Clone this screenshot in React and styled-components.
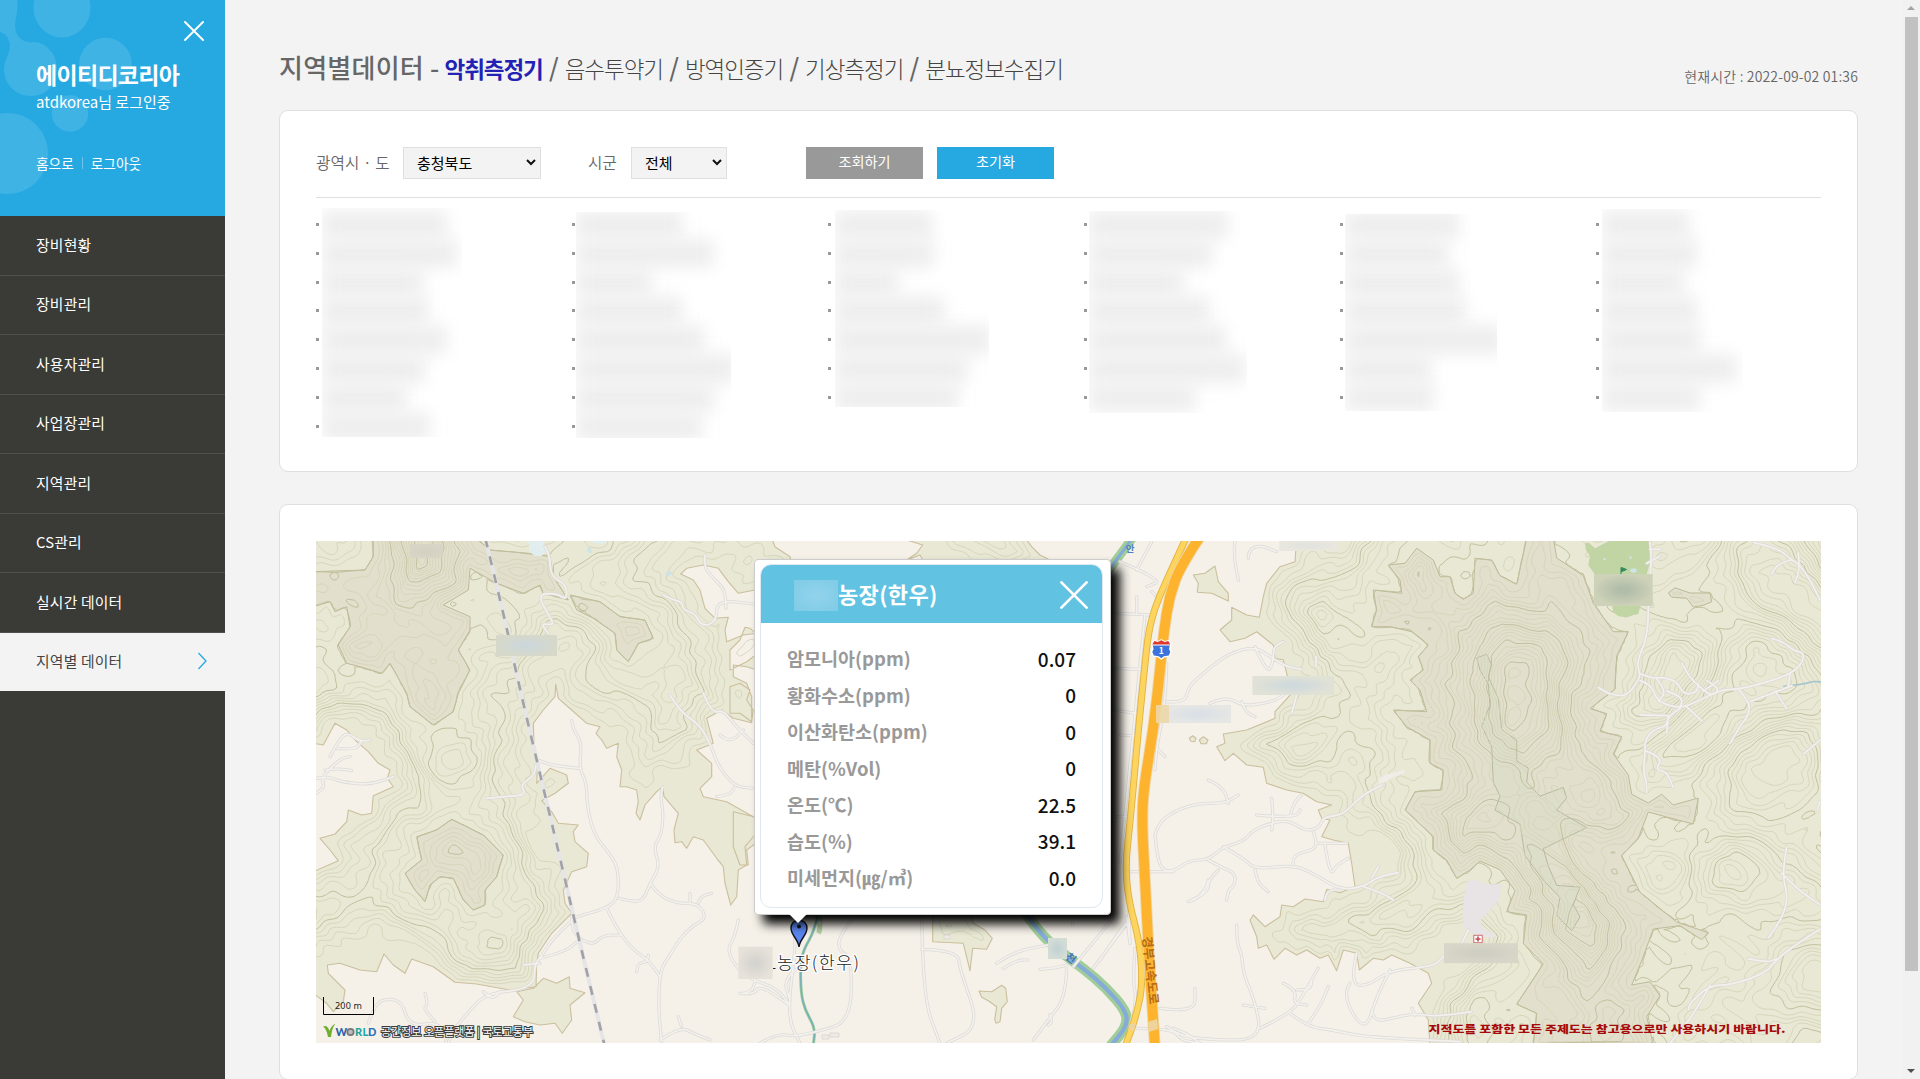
import React from "react";
import styled, { createGlobalStyle } from "styled-components";

const KR = `"Noto Sans CJK KR", "Noto Sans", sans-serif`;

/* ------------------------------------------------------------------ */
/* Terrain                                                             */
/* ------------------------------------------------------------------ */

const MAP = { x: 316, y: 541, w: 1505, h: 502 };

// Survey sheets: every sheet has an origin and its own units per pixel.
const SHEETS = {
  west: [310, 530, 3, 3],
  east: [1100, 530, 3, 3],
  far: [1420, 530, 3, 2.856],
  south: [740, 880, 3, 3],
  mid: [740, 540, 3, 3],
};

const pts = (sheet, text) => {
  const [ox, oy, sx, sy] = SHEETS[sheet];
  return text
    .trim()
    .split(/\s+/)
    .map((p) => p.split(",").map(Number))
    .map(([u, v]) => [ox + u / sx, oy + v / sy]);
};

const fmt = (n) => n.toFixed(1);

const closed = (p) => "M" + p.map(([x, y]) => `${fmt(x)} ${fmt(y)}`).join("L") + "Z";

const smooth = (p) => {
  let d = `M${fmt(p[0][0])} ${fmt(p[0][1])}`;
  for (let i = 1; i < p.length - 1; i++) {
    const mx = (p[i][0] + p[i + 1][0]) / 2;
    const my = (p[i][1] + p[i + 1][1]) / 2;
    d += `Q${fmt(p[i][0])} ${fmt(p[i][1])} ${fmt(mx)} ${fmt(my)}`;
  }
  const e = p[p.length - 1];
  return d + `L${fmt(e[0])} ${fmt(e[1])}`;
};

const HILLS = [
  pts("west", `10,25 1385,25 1395,50 1440,80 1445,100 1400,170 1335,180 1285,190 1255,155 1225,115 1180,105 1130,115 1112,132 1150,150 1170,180 1185,235 1215,265 1255,262 1245,300 1250,335 1300,315 1340,310 1400,350 1340,420 1310,410 1270,405 1270,440 1310,460 1325,500 1325,578 1270,565 1235,540 1190,565 1210,640 1160,660 1205,700 1205,740 1170,775 1180,800 1250,815 1332,862 1370,880 1332,918 1305,950 1310,1005 1285,1020 1280,1100 1262,1125 1245,1060 1240,1010 1220,985 1180,930 1150,920 1130,955 1115,935 1095,938 1092,900 1105,850 1062,800 1058,770 1040,785 1005,825 990,870 978,850 985,815 980,780 950,770 930,770 935,720 920,680 925,640 890,655 875,630 858,610 870,590 830,580 785,540 745,505 737,462 735,500 700,540 670,580 672,640 683,700 680,760 720,715 770,735 775,760 735,790 695,812 725,845 745,880 805,885 790,905 795,935 835,970 830,1010 785,1025 760,1080 765,1120 785,1150 725,1210 685,1270 680,1300 678,1370 600,1380 500,1362 435,1357 370,1310 305,1287 285,1330 250,1305 222,1272 200,1325 150,1320 90,1300 52,1305 55,1330 105,1380 100,1415 70,1445 50,1420 10,1390 10,1025 85,992 60,960 30,925 75,912 110,875 115,840 155,855 185,850 190,797 250,770 232,745 240,720 205,700 175,665 140,635 110,600 75,580 40,645 10,640`),
  pts("west", `700,1345 740,1360 778,1340 780,1375 825,1388 780,1425 785,1470 757,1510 735,1480 690,1485 645,1475 610,1460 640,1410 620,1385 670,1375`),
  pts("east", `590,25 585,95 540,110 500,160 490,200 478,262 440,255 395,232 395,270 360,300 390,335 435,325 470,305 520,345 525,385 550,390 560,430 575,490 525,545 525,565 440,600 370,612 375,640 350,650 375,692 400,670 440,705 490,712 500,760 560,780 610,790 650,815 695,825 655,840 665,865 690,870 665,920 700,930 745,940 755,1000 765,1070 720,1088 680,1078 670,1115 615,1107 580,1130 545,1125 540,1160 495,1190 460,1155 450,1170 470,1220 475,1255 500,1245 522,1288 555,1255 590,1275 620,1260 660,1285 685,1275 710,1322 730,1260 770,1270 778,1320 820,1285 850,1290 875,1275 930,1300 985,1330 995,1360 955,1420 985,1470 990,1550 2200,1550 2200,25`),
  pts("east", `280,135 315,130 345,108 355,155 385,190 385,213 335,190 292,187 295,160`),
  pts("east", `268,625 278,617 288,625 284,635 273,634`),
  pts("east", `298,630 310,620 324,630 319,641 303,641`),
  pts("mid", `500,0 560,0 590,0 860,0 875,20 900,45 930,60 800,80 560,80 540,45 500,60 530,40 548,15`),
  pts("mid", `30,265 15,262 0,300 -30,330 -30,390 20,365 60,335 60,290`),
  pts("mid", `-30,440 0,430 30,450 20,480 40,510 35,545 0,520 -30,520`),
  pts("mid", `-20,815 60,835 60,900 20,930 25,975 0,975 -20,920`),
  pts("south", `578,100 578,185 670,190 690,272 698,205 740,208 757,175 735,150 700,130 690,100`),
  pts("south", `717,333 755,335 785,316 797,325 802,365 785,385 780,425 768,430 764,418 770,380 745,362 725,352`),
];

const SLOPES = [
  pts("west", `190,25 190,80 165,120 10,125 10,230 60,215 75,245 110,230 120,290 85,345 110,400 150,410 215,430 240,400 290,490 300,530 370,585 430,545 445,490 480,420 445,360 480,300 480,260 400,225 475,180 480,115 560,160 640,190 690,165 700,190 775,210 730,140 720,80 655,70 540,60 500,25`),
  pts("west", `780,195 870,215 930,260 1005,270 1030,325 985,340 955,395 920,360 915,310 850,265 800,240`),
  pts("west", `425,868 520,915 580,975 560,1040 525,1080 525,1125 490,1140 460,1110 430,1045 390,1040 360,1065 345,1115 315,1080 285,1030 335,990 320,920 380,900`),
  pts("east", `865,105 915,100 950,55 1000,90 1020,140 1050,140 1065,190 1090,208 1120,190 1125,85 1175,90 1200,137 1250,163 1280,25 1360,25 1370,84 1450,137 1480,220 1540,305 1585,305 1550,378 1545,478 1470,536 1520,551 1500,604 1565,620 1540,672 1585,735 1595,793 1645,819 1685,793 1720,825 1795,804 1780,882 1700,861 1645,846 1615,924 1565,977 1620,1087 1730,1176 1825,1208 1805,1229 1740,1187 1660,1197 1625,1292 1595,1365 1650,1355 1680,1397 1640,1460 1660,1545 1300,1545 1310,1450 1250,1423 1330,1302 1270,1240 1280,1155 1220,1145 1245,1082 1200,1019 1140,993 1110,1020 1070,1045 1040,990 1000,960 1000,920 915,840 945,785 1025,780 1030,720 990,700 990,630 920,590 880,540 980,545 960,480 930,450 970,420 955,380 985,345 935,305 870,290 815,290 830,240 820,180 905,190 900,150`),
  pts("far", `745,180 765,165 810,180 870,180 875,205 850,215 820,220 800,195 755,192`),
];

const SUMMIT = pts("far", `170,365 200,355 215,385 205,420 235,480 245,570 290,600 290,660 325,680 320,720 360,760 430,735 440,765 410,800 500,850 370,910 385,960 410,1015 480,1020 460,1070 480,1105 455,1145 410,1100 420,1050 370,1000 315,930 300,840 225,800 240,760 220,720 215,620 185,560 210,500 205,440 180,400`);

const beyond = ([x, y]) => x <= 316 || y <= 541 || x >= 1821 || y >= 1043;

const edgesOf = (polys) => {
  const out = [];
  polys.forEach((p) =>
    p.forEach((a, i) => {
      const b = p[(i + 1) % p.length];
      if (!(beyond(a) && beyond(b))) out.push([a[0], a[1], b[0] - a[0], b[1] - a[1]]);
    })
  );
  return out;
};

const distance = (edges, x, y) => {
  let best = 1e9;
  for (let i = 0; i < edges.length; i++) {
    const e = edges[i];
    const px = x - e[0];
    const py = y - e[1];
    let t = (px * e[2] + py * e[3]) / (e[2] * e[2] + e[3] * e[3]);
    t = t < 0 ? 0 : t > 1 ? 1 : t;
    const dx = px - t * e[2];
    const dy = py - t * e[3];
    const d = dx * dx + dy * dy;
    if (d < best) best = d;
  }
  return Math.sqrt(best);
};

const inside = (polys, x, y) =>
  polys.some((p) => {
    let hit = false;
    for (let i = 0, j = p.length - 1; i < p.length; j = i++) {
      if (p[i][1] > y !== p[j][1] > y && x < ((p[j][0] - p[i][0]) * (y - p[i][1])) / (p[j][1] - p[i][1]) + p[i][0]) hit = !hit;
    }
    return hit;
  });

const buildContours = () => {
  const step = 3.5;
  const cols = Math.ceil(MAP.w / step) + 1;
  const rows = Math.ceil(MAP.h / step) + 1;
  const hillEdges = edgesOf(HILLS);
  const slopeEdges = edgesOf(SLOPES);
  const h = new Float32Array(cols * rows);
  for (let r = 0; r < rows; r++) {
    for (let c = 0; c < cols; c++) {
      const x = MAP.x + c * step;
      const y = MAP.y + r * step;
      const a = distance(hillEdges, x, y);
      if (!inside(HILLS, x, y)) {
        h[r * cols + c] = -a / 8;
        continue;
      }
      const b = distance(slopeEdges, x, y);
      const fine = Math.sin(x / 8 + 2 * Math.sin(y / 13)) * Math.cos(y / 7 + 1.6 * Math.sin(x / 15));
      const broad = Math.sin(x / 33 + 1.7 * Math.sin(y / 39)) + Math.cos(y / 29 + 1.9 * Math.sin(x / 45));
      const base = inside(SLOPES, x, y) ? 10 + b / 5 : (10 * a) / (a + Math.min(b, 90));
      const near = Math.min(a, b);
      h[r * cols + c] = base + fine * Math.min(0.75, near / 14) + broad * Math.min(4.2, near / 12);
    }
  }
  let minor = "";
  let major = "";
  for (let r = 0; r < rows - 1; r++) {
    for (let c = 0; c < cols - 1; c++) {
      const v = [h[r * cols + c], h[r * cols + c + 1], h[(r + 1) * cols + c + 1], h[(r + 1) * cols + c]];
      const lo = Math.max(1, Math.ceil(Math.min(...v)));
      const hi = Math.floor(Math.max(...v));
      const x = MAP.x + c * step;
      const y = MAP.y + r * step;
      const corner = [[x, y], [x + step, y], [x + step, y + step], [x, y + step]];
      for (let k = lo; k <= hi; k++) {
        const cross = [];
        for (let s = 0; s < 4; s++) {
          const n = (s + 1) % 4;
          if (v[s] >= k !== v[n] >= k) {
            const t = (k - v[s]) / (v[n] - v[s]);
            cross.push(`${fmt(corner[s][0] + (corner[n][0] - corner[s][0]) * t)} ${fmt(corner[s][1] + (corner[n][1] - corner[s][1]) * t)}`);
          }
        }
        for (let q = 0; q + 1 < cross.length; q += 2) {
          const seg = `M${cross[q]}L${cross[q + 1]}`;
          if (k % 5 === 0) major += seg;
          else minor += seg;
        }
      }
    }
  }
  return { minor, major };
};

const CONTOURS = buildContours();

const ROADS = {
  west: `705,50 720,75 722,140 770,165 770,210 740,190 680,192 725,270 730,285 692,280 715,310
785,572 790,600 815,635 808,715 830,760 830,820 850,910 890,960 925,1010 925,1105 890,1135 800,1160
683,690 715,705 808,715
530,805 580,800 650,795 630,765 670,740 680,700
1058,770 1050,800 1060,840 1055,915 1030,950 1050,1010 1020,1060 1000,1110 970,1115 925,1105
1020,1060 1045,1095 1100,1120 1165,1120 1190,1165 1150,1185 1110,1225 1080,1275 1050,1320 1045,1430 1055,1540
890,1135 925,1205 970,1260 1015,1290 1050,1340
1015,1275 1015,1295 985,1300 980,1325
1140,1090 1140,1120
1165,1120 1170,1100 1205,1090
800,1160 740,1210 690,1285 675,1300 670,1375 530,1390 480,1440 430,1500 415,1540
640,1305 690,1300
690,1285 770,1265 810,1225 850,1245 880,1215 935,1215
785,1160 785,1200 815,1230
175,1480 195,1420 235,1405 275,1415 300,1490 390,1475 410,1540
345,1390 355,1425 340,1435 375,1475
520,1385 545,1410 570,1385
18,745 60,740 90,755 180,765 250,740
18,790 45,775 35,745 60,715 95,685 120,680
60,680 80,640 110,605 150,635 180,630
45,720 80,715 125,722
80,655 140,660 155,630
1060,195 1090,210 1115,215 1120,240 1155,250 1175,290 1220,275 1220,210 1335,222
1185,75 1180,110 1215,150 1245,180 1248,235
1080,495 1110,545 1170,585 1205,650 1225,710 1275,770 1330,775
1180,490 1205,550 1240,540 1270,580 1330,640
1230,615 1260,640 1300,600
1220,800 1260,795 1275,770
1285,1170 1275,1220 1250,1260 1285,1320 1330,1350 1400,1375 1435,1420
1050,1530 1110,1490 1150,1510 1200,1530
1105,1460 1115,1490
1300,1390 1325,1385 1335,1355`,
  south: `545,110 548,350 600,490
545,208 652,210 660,270 720,440 620,490
1165,125 1060,265
1110,125 1000,260
980,260 978,350 925,420 880,480
900,268 940,265 980,255
930,405 938,425 925,435
335,120 295,170 298,215 335,230 333,425 228,455
165,120 165,200 160,260 148,350 150,430 180,490
165,270 130,300 150,360
0,340 40,345 60,315 148,375
60,490 110,460 165,470 228,455
770,250 820,215 925,195
790,265 830,240 865,240
1160,110 1170,190
1185,205 1178,300 1190,360 1170,440
1180,445 1300,445 1320,480 1380,490
1300,445 1340,460 1380,490
998,110 998,135
1345,65 1370,60 1400,20 1405,0`,
  east: `445,85 445,60 480,45 530,65
405,33 400,70 415,150
50,250 155,255
135,255 105,560 60,1000
60,95 190,150 140,170
110,120 155,35
155,185 180,210
110,200 110,250
45,415 120,418
40,540 110,550
60,615 105,618
50,860 85,860
80,1025 220,1025
200,400 197,515 170,650 165,720
170,655 195,680
0,1290 75,1180
85,1100 90,1240
200,515 255,520 265,470 310,430 385,370 465,350 510,380 560,410 605,418
465,350 500,430 520,400 520,350 550,335
330,520 380,498 430,530 520,515 550,495
425,515 435,545 465,560
590,495 575,550
648,380 648,410
165,915 175,880 220,845 290,820 375,820 415,795
325,750 370,770 385,820
165,915 170,970 185,1020 220,1025 270,990 325,990 370,950 430,935 460,900 510,880 565,870 620,905 660,890 670,860 730,855 780,800 845,765
470,855 520,860 590,858 600,840
515,805 520,860 515,900
570,860 580,820 605,795
370,950 430,985 465,1018 580,1005 640,1030 720,1080 790,1070 835,1040 895,1028
580,1005 575,975 640,960 650,940 640,905
650,940 740,940
675,945 690,1040 710,1005 745,985
325,990 370,1015 405,1030 405,1065 385,1080 380,1110
355,1020 325,1050 325,1085 265,1115
465,1018 470,1055 505,1085
815,1045 835,1010
675,1110 680,1080 720,1080
790,1070 850,1090 880,1110
410,1185 410,1240 425,1270 430,1330 455,1390 470,1440 480,1495 450,1530 350,1530 250,1520 200,1490
430,1425 460,1430 495,1435
180,1435 285,1450 285,1375
480,1495 570,1450 600,1410 655,1315
570,1450 620,1490 700,1500 785,1520 1080,1535
550,1360 590,1380 580,1420 620,1425
590,1380 630,1380 635,1355
625,1480 660,1430 685,1370
770,1270 750,1360 800,1370 870,1320 1000,1310 1030,1280
1085,1240 1105,1200
750,1360 725,1395 795,1510 830,1400 870,1320
815,1440 820,1475 880,1465 940,1450 1010,1460 1115,1445
935,1435 945,1455`,
  far: `690,35 697,90 685,150 685,300 650,375 660,410 655,430 620,475 570,470 535,450
680,95 720,75
690,55 722,55
660,410 700,425 720,420 770,430 790,470 830,465 835,440
660,430 695,440 710,490 780,510 830,490 905,455 955,455 1040,435 1115,410 1150,375 1150,350 1120,345 1090,320 1055,310
710,425 740,460 715,490
740,460 790,475 780,510
800,505 845,545
780,510 745,530 740,560 700,570 675,600 675,640 670,690 680,720 680,750
660,528 745,530
745,530 740,580
675,630 730,650 705,685 740,690 760,735
785,380 805,415 835,445 875,475 900,455 860,430
850,460 895,430
955,455 990,490 985,530 960,560 930,610
990,490 1060,465 1115,445
1105,445 1110,410
1065,460 1100,510
1000,35 1070,50 1115,85 1140,100 1175,150 1200,200
1135,65 1140,110 1125,150
1115,85 1075,95 1055,125
1200,600 1150,640
1100,905 1085,980 1105,1050 1085,1110 1045,1165
1085,980 1130,1025 1200,1070
1200,1140 1140,1175 1065,1230 1040,1265 930,1300 870,1300 810,1350 805,1370
870,1300 825,1380 750,1465
985,1225 1040,1235 1070,1225
1200,775 1192,800`,
};

const ROAD_PATH = Object.entries(ROADS)
  .flatMap(([sheet, text]) => text.split("\n").map((line) => smooth(pts(sheet, line))))
  .join("");

const HILL_PATH = HILLS.map(closed).join("");
const SLOPE_PATH = SLOPES.map(closed).join("");
const HIGHWAY = smooth(pts("east", `300,20 240,110 208,200 192,300 180,420 160,600 130,780 126,880 135,1050 145,1250 158,1450 165,1550`));
const BYWAY = smooth(pts("east", `260,20 195,160 162,240 145,310 135,400 115,600 90,880 76,1000 85,1110 120,1240 128,1370 105,1470 75,1550`));
const RAIL = smooth(pts("west", `526,25 590,290 612,400 680,690 735,920 805,1220 884,1548`));
const RIVER = smooth(pts("south", `850,90 895,155 960,215 1030,265 1100,325 1160,395 1160,440 1110,500`));
const RIVER_NORTH = smooth(pts("east", `100,20 60,75 20,130`));
const CREEK = smooth(pts("south", `235,100 222,155 190,210 181,260 183,340 195,390 226,445 220,495`));

const SMUDGES = [
  ["west", 300, 42, 398, 84, "#d9d5c6", "#d5d1c2"],
  ["west", 558, 315, 741, 378, "#d6d9ca", "#cdd7da"],
  ["west", 1285, 1250, 1388, 1347, "#e6e1d9", "#d6d4d0"],
  ["east", 538, 30, 715, 63, "#e9e7dd", "#e2e3df"],
  ["east", 457, 438, 702, 495, "#e0e2d6", "#d0d9dc"],
  ["east", 195, 525, 393, 579, "#e6e7e4", "#dae0e6"],
  ["far", 522, 126, 698, 217, "#cdd2b8", "#b2bda9"],
  ["far", 72, 1180, 294, 1237, "#d8d6c8", "#cfcec3"],
  ["south", 924, 174, 981, 237, "#d3ddd6", "#c3d2d3"],
];

const Smudge = ({ item: [sheet, u1, v1, u2, v2, edge, core], id }) => {
  const [[x1, y1], [x2, y2]] = pts(sheet, `${u1},${v1} ${u2},${v2}`);
  return (
    <>
      <radialGradient id={id}>
        <stop offset="0.2" stopColor={core} />
        <stop offset="1" stopColor={edge} />
      </radialGradient>
      <rect x={x1} y={y1} width={x2 - x1} height={y2 - y1} fill={`url(#${id})`} />
    </>
  );
};

const MapSvg = styled.svg`
  display: block;
  width: 1505px;
  height: 502px;
  font-family: ${KR};
`;

const Terrain = () => (
  <MapSvg viewBox="316 541 1505 502">
    <rect x="316" y="541" width="1505" height="502" fill="#f5f1e9" />
    <path d={HILL_PATH} fill="#e8e8d4" stroke="#cbbf9d" strokeWidth="1.1" strokeLinejoin="round" />
    <path d={SLOPE_PATH} fill="#e2dfcc" stroke="#bdba98" strokeWidth="1" strokeLinejoin="round" />
    <path d={closed(SUMMIT)} fill="#dddeca" stroke="#b6bb9d" strokeWidth="1" strokeLinejoin="round" />
    <path d={CONTOURS.minor} fill="none" stroke="#d6d4b9" strokeWidth="0.9" />
    <path d={CONTOURS.major} fill="none" stroke="#c2c09e" strokeWidth="1" />

    <path d={closed(pts("west", `655,25 658,65 675,78 695,78 708,65 700,25`))} fill="#e2edee" />
    <path d={closed(pts("west", `835,25 850,38 870,42 890,36 895,25`))} fill="#e2edee" />
    <path d="M588 546l4 4-1 4-4-3zM665 573l6-2 1 3-5 3z" fill="#cfe3e6" />

    <path d={closed(pts("far", `495,38 505,36 525,52 570,30 600,20 690,20 690,90 680,128 525,128 505,100 510,75 497,55`))} fill="#c0d4a4" />
    <path d={closed(pts("far", `576,212 662,212 655,240 640,243 620,250 595,246 580,235`))} fill="#c0d4a4" />
    <path d={closed(pts("far", `140,1005 165,998 195,1012 245,1012 235,1060 180,1115 190,1140 228,1155 220,1165 170,1160 130,1130 130,1060`))} fill="#e8e3e4" />
    <path d={closed(pts("east", `835,745 860,733 912,720 914,730 880,742 838,765`))} fill="#f0ece8" />

    <path d={RIVER_NORTH} fill="none" stroke="#a0cd98" strokeWidth="9" />
    <path d={RIVER_NORTH} fill="none" stroke="#86abd9" strokeWidth="3" />
    <path d={RIVER} fill="none" stroke="#a0cd98" strokeWidth="10.5" />
    <path d={RIVER} fill="none" stroke="#86abd9" strokeWidth="4.2" />
    <path d={smooth(pts("south", `240,110 240,150 235,160`))} fill="none" stroke="#b4d3a4" strokeWidth="5" />
    <path d={CREEK} fill="none" stroke="#a5cfa0" strokeWidth="3" />
    <path d={CREEK} fill="none" stroke="#77b1b8" strokeWidth="1.6" />
    <path d={smooth(pts("far", `1090,446 1150,441 1180,432 1203,434`))} fill="none" stroke="#9fc3cf" strokeWidth="1.6" />

    <path d={ROAD_PATH} fill="none" stroke="#dcdad5" strokeWidth="3.2" strokeLinecap="round" strokeLinejoin="round" />
    <path d={ROAD_PATH} fill="none" stroke="#f3f0ee" strokeWidth="1.7" strokeLinecap="round" strokeLinejoin="round" />

    <path d={RAIL} fill="none" stroke="#e5e5e7" strokeWidth="4" />
    <path d={RAIL} fill="none" stroke="#a2a2a6" strokeWidth="2.6" strokeDasharray="9 9.4" />

    <path d={BYWAY} fill="none" stroke="#e0b243" strokeWidth="7" />
    <path d={BYWAY} fill="none" stroke="#fdd45d" strokeWidth="5.2" />
    <path d={HIGHWAY} fill="none" stroke="#efd6a6" strokeWidth="11.6" />
    <path d={HIGHWAY} fill="none" stroke="#fdb32d" strokeWidth="9.8" />
    <path d="M1148 1022l9-3 1 10-9 3zM1130 1024l6-1-2 8-6-1z" fill="#eed49a" />

    <path d="M818 921h3v3h-3zM830 1033h9v4h-9zM822 1035h7v4h-7zM944 935h6v4h-6zM934 920h5v3h-5z" fill="#eeeae5" stroke="#d5d1cb" strokeWidth="0.7" />
    <text x="1130" y="551.500" fontSize="9.500" fontWeight="700" fill="#4f82bd" textAnchor="middle">안</text>
    <text x="1071" y="962" fontSize="10.5" fontWeight="700" fill="#4377b5" textAnchor="middle" transform="rotate(38 1071 958)">천</text>
    <text transform="translate(1142.5 937) rotate(84)" fontSize="12.5" fontWeight="700" fill="#b56c16" textLength="68">경부고속도로</text>

    <g transform="translate(1161.3 649)">
      <path d="M-10.5-6l3-3 4 1 3.5-2 3.5 2 4-1 3 3-1 5 1 4-2 4.500-5.500 1-3 2.500-3-2.500-5.500-1-2-4.500 1-4z" fill="#fff" />
      <path d="M-9-4.500l2-3.500 3.500 1L0-8.800l3.500 1.800 3.500-1 2 3.500z" fill="#dd3b2d" />
      <path d="M-8.500-3.500h17l-.8 3.500 1.300 3-1.500 3.500-5 .8L0 9.300-2.500 7.300l-5-.8L-9 3l1.300-3z" fill="#3c74de" />
      <text x="0" y="5.200" textAnchor="middle" fontSize="8.500" fontWeight="700" fill="#fff">1</text>
    </g>

    <path d="M1621 567.500v8M1621.500 567.500l5 2-5 2.200z" stroke="#338a5a" strokeWidth="1" fill="#338a5a" />
    <ellipse cx="1633.500" cy="570.500" rx="3.300" ry="2.300" fill="#cfe2e4" />
    <circle cx="1604.500" cy="559" r="1.300" fill="#cfe2e4" />
    <circle cx="1630.500" cy="557.500" r="1.300" fill="#cfe2e4" />
    <rect x="1473.800" y="935.300" width="8.400" height="7.400" fill="#fff" stroke="#cf6f72" strokeWidth="1" />
    <path d="M1478 936.500v5M1475.500 939h5" stroke="#c94b50" strokeWidth="1.600" />

    {SMUDGES.map((item, i) => (
      <Smudge key={i} id={`smudge${i}`} item={item} />
    ))}
    <rect x="1156" y="705" width="13" height="18" fill="#ecd7a9" opacity="0.9" />

    <path d="M799 947c-.8-8-8-11.500-8-19a8 8 0 0 1 16 0c0 7.500-7.200 11-8 19z" fill="#5b86f0" stroke="#10131c" strokeWidth="1.400" />
    <circle cx="799" cy="926.500" r="2" fill="#10131c" />
    <path d="M773 968.500h2.500" stroke="#222" strokeWidth="1" />
    <text x="777" y="969" fontSize="17.500" fill="#222" stroke="#fff" strokeWidth="2.500" paintOrder="stroke" fontWeight="300" textLength="82">농장(한우)</text>

    <path d="M323.500 997v17.500h50V997" fill="none" stroke="#000" strokeWidth="1" />
    <text x="348.500" y="1008.500" textAnchor="middle" fontSize="9" fill="#222" textLength="27" fontFamily="Noto Sans">200 m</text>

    <path d="M323 1026.500c3-1.500 5 0 6.500 4.500 1-3 2.500-6 6-7.500-2.500 3-4 8-4.500 13.500h-3c-1-5-2-8.500-5-10.500z" fill="#6fae2f" />
    <g fontFamily="Lato" fontSize="11" fontWeight="900">
      <text x="335.500" y="1036" fill="#2b63a9">W</text>
      <circle cx="350.500" cy="1032" r="3.200" fill="#bbb" stroke="#777" strokeWidth="1.700" />
      <text x="355" y="1036" fill="#20a6a0">R</text>
      <text x="362.500" y="1036" fill="#1fa7b3">L</text>
      <text x="368" y="1036" fill="#2b6fb8">D</text>
    </g>
    <text x="381" y="1035.500" fontSize="11" fill="#fff" stroke="#3c3c3c" strokeWidth="2" paintOrder="stroke" textLength="152">공간정보 오픈플랫폼 | 국토교통부</text>
    <text x="1428.500" y="1032.500" fontSize="10.500" fontWeight="900" fill="#a60a0a" textLength="357" lengthAdjust="spacingAndGlyphs">지적도를 포함한 모든 주제도는 참고용으로만 사용하시기 바랍니다.</text>
  </MapSvg>
);

/* ------------------------------------------------------------------ */
/* Page                                                                */
/* ------------------------------------------------------------------ */

const GlobalStyle = createGlobalStyle`
  * { box-sizing: border-box; }
  body { margin: 0; background: #f3f3f3; font-family: ${KR}; overflow: hidden; }
  ul, dl, dd, h1, h2, p { margin: 0; padding: 0; list-style: none; }
`;

const Page = styled.div`
  display: flex;
  width: 1920px;
  height: 1079px;
  overflow: hidden;
`;

const Sidebar = styled.aside`
  width: 225px;
  flex: none;
  background: #3a3a36;
`;

const Profile = styled.header`
  position: relative;
  height: 216px;
  padding: 0 0 0 36px;
  background: #26a9e1;
  color: #fff;
  overflow: hidden;
`;

const Bubbles = styled.svg`
  position: absolute;
  left: 0;
  top: 0;
`;

const ProfileBody = styled.div`
  position: relative;
  display: flex;
  flex-direction: column;
  height: 100%;
`;

const CloseRow = styled.div`
  display: flex;
  justify-content: flex-end;
  padding: 21px 21px 0 0;
  height: 57px;
`;

const Company = styled.h2`
  font-size: 23px;
  line-height: 34px;
  font-weight: 700;
  letter-spacing: -0.7px;
  white-space: nowrap;
`;

const Login = styled.p`
  padding-top: 1px;
  font-size: 15px;
  line-height: 20px;
  white-space: nowrap;
`;

const QuickLinks = styled.div`
  display: flex;
  align-items: center;
  margin-top: 41px;
  font-size: 13.7px;
  line-height: 20px;
`;

const Divider = styled.i`
  width: 1px;
  height: 12px;
  margin: 0 8px;
  background: #6cc5eb;
`;

const MenuItem = styled.li`
  display: flex;
  align-items: center;
  justify-content: space-between;
  height: 59.5px;
  padding: 0 17px 2px 36px;
  border-bottom: 1px solid ${(p) => (p.$active ? "#3a3a36" : "#50504c")};
  background: ${(p) => (p.$active ? "#f3f3f3" : "transparent")};
  color: ${(p) => (p.$active ? "#444" : "#fff")};
  font-size: 14.8px;
  letter-spacing: 0.2px;
`;

const Main = styled.main`
  width: 1633px;
  padding: 0 0 0 54px;
`;

const TitleRow = styled.div`
  display: flex;
  align-items: flex-start;
  justify-content: space-between;
  height: 110px;
`;

const Title = styled.h1`
  display: flex;
  align-items: center;
  height: 40px;
  margin-top: 46px;
  font-size: 26px;
  font-weight: 500;
  color: #666;
  white-space: nowrap;
`;

const TitleText = styled.span`
  width: 165.5px;
  letter-spacing: 0.25px;
`;

const Kind = styled.a`
  width: ${(p) => p.$w}px;
  padding-top: 3px;
  font-size: 22.5px;
  letter-spacing: -1.05px;
  font-weight: ${(p) => (p.$on ? 700 : 300)};
  color: ${(p) => (p.$on ? "#2222b4" : "#444")};
`;

const Slash = styled.span`
  width: 15.7px;
  font-size: 25px;
`;

const Now = styled.p`
  margin-top: 65.5px;
  font-size: 14px;
  line-height: 20px;
  letter-spacing: 0.15px;
  color: #666;
  font-weight: 350;
`;

const Card = styled.section`
  width: 1579px;
  height: ${(p) => p.$h}px;
  margin-bottom: 32px;
  padding: 36px;
  border: 1px solid #dfdfdf;
  border-radius: 9px;
  background: #fff;
`;

const Filters = styled.div`
  display: flex;
  align-items: center;
  height: 51px;
  padding-bottom: 19px;
  border-bottom: 1px solid #dfdfdf;
`;

const Label = styled.label`
  width: ${(p) => p.$w}px;
  padding-bottom: 1px;
  font-size: 15.6px;
  letter-spacing: 0.1px;
  font-weight: 350;
  color: #666;
  white-space: pre;
`;

const Select = styled.div`
  display: flex;
  align-items: center;
  justify-content: space-between;
  width: ${(p) => p.$w}px;
  height: 32px;
  margin-right: ${(p) => p.$gap}px;
  padding: 0 4px 1px 13px;
  border: 1px solid #dfdfdf;
  background: #f3f3f3;
  font-size: 15px;
  color: #000;
`;

const Button = styled.button`
  width: 117px;
  height: 32px;
  margin-right: 14px;
  padding: 0 0 3px;
  border: 0;
  background: ${(p) => p.$bg};
  color: #fff;
  font: 400 14.2px ${KR};
`;

const Regions = styled.div`
  display: grid;
  grid-template-columns: repeat(6, 256.1px);
`;

const RegionColumn = styled.div`
  display: flex;
  align-items: flex-start;
`;

const Bullets = styled.ul`
  display: flex;
  flex-direction: column;
  gap: 25.83px;
  padding-top: 25px;
`;

const Bullet = styled.li`
  width: 3px;
  height: 3px;
  background: #999;
`;

const Veil = styled.div`
  display: flex;
  flex-direction: column;
  width: ${(p) => p.$w}px;
  height: ${(p) => p.$h}px;
  margin: ${(p) => p.$top}px 0 0 ${(p) => p.$left}px;
  overflow: hidden;

  & > :first-child {
    margin-top: ${(p) => 12 - p.$top}px;
  }
`;

const VeilRow = styled.div`
  flex: none;
  width: ${(p) => p.$w}px;
  height: 28.83px;
  background: #eeeeee;
  filter: blur(8px);
`;

const MapFrame = styled.div`
  position: relative;
  width: 1505px;
  height: 502px;
`;

const Popup = styled.div`
  position: absolute;
  left: 438px;
  top: 18px;
  width: 357px;
  height: 356px;
  padding: 4px 7px 6px 5px;
  border: 1px solid #ccc;
  border-radius: 4px;
  background: #fff;
  box-shadow: 9px 9px 11px #000;
`;

const Tail = styled.i`
  position: absolute;
  left: 33px;
  top: 353px;
  border: 10px solid transparent;
  border-top-color: #fff;
  border-bottom: 0;
`;

const PopupInner = styled.div`
  height: 344px;
  border: 1px solid #dfe8f0;
  border-radius: 11px;
  overflow: hidden;
`;

const PopupHead = styled.div`
  display: flex;
  align-items: center;
  height: 59px;
  margin: -1px -1px 0;
  padding: 0 15px 0 34px;
  background: #62c2e2;
  color: #fff;
  font-size: 22px;
  font-weight: 700;
`;

const NameVeil = styled.span`
  width: 44px;
  height: 31px;
  margin-top: 3px;
  background: radial-gradient(#92d3ec, #7fcbe6);
`;

const PopupName = styled.span`
  padding-bottom: 2px;
  letter-spacing: 0.35px;
`;

const PopupClose = styled.button`
  display: flex;
  margin: 3px 0 0 auto;
  padding: 0;
  border: 0;
  background: none;
`;

const Readings = styled.dl`
  padding: 17px 26px 0 26px;
`;

const Reading = styled.div`
  display: flex;
  align-items: center;
  justify-content: space-between;
  height: 36.5px;
  font-size: 18.5px;
`;

const ReadingName = styled.dt`
  font-weight: 700;
  color: #999;
`;

const ReadingValue = styled.dd`
  font-size: 19px;
  font-weight: 500;
  color: #111;
`;

const Scrollbar = styled.div`
  display: flex;
  flex-direction: column;
  align-items: center;
  width: 17px;
  height: 1079px;
  margin-left: auto;
  padding-right: 1px;
  background: #f1f1f1;
`;

const Arrow = styled.i`
  flex: none;
  margin: ${(p) => (p.$down ? "auto 0 6px" : "6px 0 7px")};
  border: 4px solid transparent;
  border-${(p) => (p.$down ? "top" : "bottom")}-color: ${(p) => (p.$down ? "#505050" : "#a3a3a3")};
  border-${(p) => (p.$down ? "bottom" : "top")}: 0;
`;

const Thumb = styled.div`
  width: 13px;
  height: 954px;
  background: #c1c1c1;
`;

const MENU = ["장비현황", "장비관리", "사용자관리", "사업장관리", "지역관리", "CS관리", "실시간 데이터", "지역별 데이터"];

const KINDS = ["악취측정기", "음수투약기", "방역인증기", "기상측정기", "분뇨정보수집기"];

const COLUMNS = [
  { left: 3, top: 10, w: 140, h: 229, rows: [125, 135, 101, 106, 125, 103, 84, 108] },
  { left: 1, top: 14, w: 155, h: 226, rows: [106, 138, 75, 106, 128, 160, 138, 126] },
  { left: 4, top: 12, w: 154, h: 197, rows: [97, 99, 63, 109, 156, 133, 123] },
  { left: 2, top: 13, w: 158, h: 202, rows: [139, 123, 94, 120, 137, 156, 106] },
  { left: 2, top: 16, w: 152, h: 197, rows: [114, 103, 114, 120, 158, 86, 89] },
  { left: 3, top: 11, w: 141, h: 203, rows: [87, 95, 81, 95, 98, 135, 98] },
];

const READINGS = [
  ["암모니아(ppm)", "0.07"],
  ["황화수소(ppm)", "0"],
  ["이산화탄소(ppm)", "0"],
  ["메탄(%Vol)", "0"],
  ["온도(℃)", "22.5"],
  ["습도(%)", "39.1"],
  ["미세먼지(㎍/㎥)", "0.0"],
];

const Cross = ({ size, width }) => (
  <svg width={size} height={size} viewBox="0 0 20 20">
    <path d="M1 1l18 18M19 1L1 19" stroke="#fff" strokeWidth={width} strokeLinecap="round" />
  </svg>
);

const Chevron = () => (
  <svg width="10" height="7" viewBox="0 0 10 7">
    <path d="M1 1l4 4 4-4" fill="none" stroke="#111" strokeWidth="2" />
  </svg>
);

export default function App() {
  return (
    <>
      <GlobalStyle />
      <Page>
        <Sidebar>
          <Profile>
            <Bubbles width="225" height="216" fill="#40b3e5">
              <path d="M0 0h17c2 12-4 22-1 32 3 8 10 11 17 10 13 0 24 12 24 27s-11 27-26 27S5 85 4 70c0-10 6-16 6-25C9 37 5 33 0 32z" />
              <ellipse cx="62" cy="8" rx="28.500" ry="29.500" />
              <circle cx="105.500" cy="64" r="26.300" />
              <circle cx="70" cy="113.500" r="18.200" />
              <circle cx="7.500" cy="153.500" r="40.500" />
            </Bubbles>
            <ProfileBody>
              <CloseRow>
                <Cross size={20} width={1.9} />
              </CloseRow>
              <Company>에이티디코리아</Company>
              <Login>atdkorea님 로그인중</Login>
              <QuickLinks>
                홈으로
                <Divider />
                로그아웃
              </QuickLinks>
            </ProfileBody>
          </Profile>
          <ul>
            {MENU.map((name, i) => (
              <MenuItem key={name} $active={i === 7}>
                {name}
                {i === 7 && (
                  <svg width="11" height="18" viewBox="0 0 11 18">
                    <path d="M1.500 1l7.500 8-7.500 8" fill="none" stroke="#26a9e1" strokeWidth="1.300" />
                  </svg>
                )}
              </MenuItem>
            ))}
          </ul>
        </Sidebar>

        <Main>
          <TitleRow>
            <Title>
              <TitleText>지역별데이터 -</TitleText>
              {KINDS.map((kind, i) => (
                <React.Fragment key={kind}>
                  {i > 0 && <Slash>/</Slash>}
                  <Kind $on={i === 0} $w={i === 4 ? 142 : 104.5}>
                    {kind}
                  </Kind>
                </React.Fragment>
              ))}
            </Title>
            <Now>현재시간 : 2022-09-02 01:36</Now>
          </TitleRow>

          <Card $h={362}>
            <Filters>
              <Label $w={87}>광역시 · 도</Label>
              <Select $w={138} $gap={47}>
                충청북도
                <Chevron />
              </Select>
              <Label $w={43}>시군</Label>
              <Select $w={96} $gap={79}>
                전체
                <Chevron />
              </Select>
              <Button $bg="#999">조회하기</Button>
              <Button $bg="#26a9e1">초기화</Button>
            </Filters>
            <Regions>
              {COLUMNS.map((col, i) => (
                <RegionColumn key={i}>
                  <Bullets>
                    {col.rows.map((_, r) => (
                      <Bullet key={r} />
                    ))}
                  </Bullets>
                  <Veil $w={col.w} $h={col.h} $top={col.top} $left={col.left}>
                    {col.rows.map((w, r) => (
                      <VeilRow key={r} $w={w} />
                    ))}
                  </Veil>
                </RegionColumn>
              ))}
            </Regions>
          </Card>

          <Card $h={576}>
            <MapFrame>
              <Terrain />
              <Popup>
                <Tail />
                <PopupInner>
                  <PopupHead>
                    <NameVeil />
                    <PopupName>농장(한우)</PopupName>
                    <PopupClose>
                      <Cross size={28} width={1.9} />
                    </PopupClose>
                  </PopupHead>
                  <Readings>
                    {READINGS.map(([name, value]) => (
                      <Reading key={name}>
                        <ReadingName>{name}</ReadingName>
                        <ReadingValue>{value}</ReadingValue>
                      </Reading>
                    ))}
                  </Readings>
                </PopupInner>
              </Popup>
            </MapFrame>
          </Card>
        </Main>

        <Scrollbar>
          <Arrow />
          <Thumb />
          <Arrow $down />
        </Scrollbar>
      </Page>
    </>
  );
}
